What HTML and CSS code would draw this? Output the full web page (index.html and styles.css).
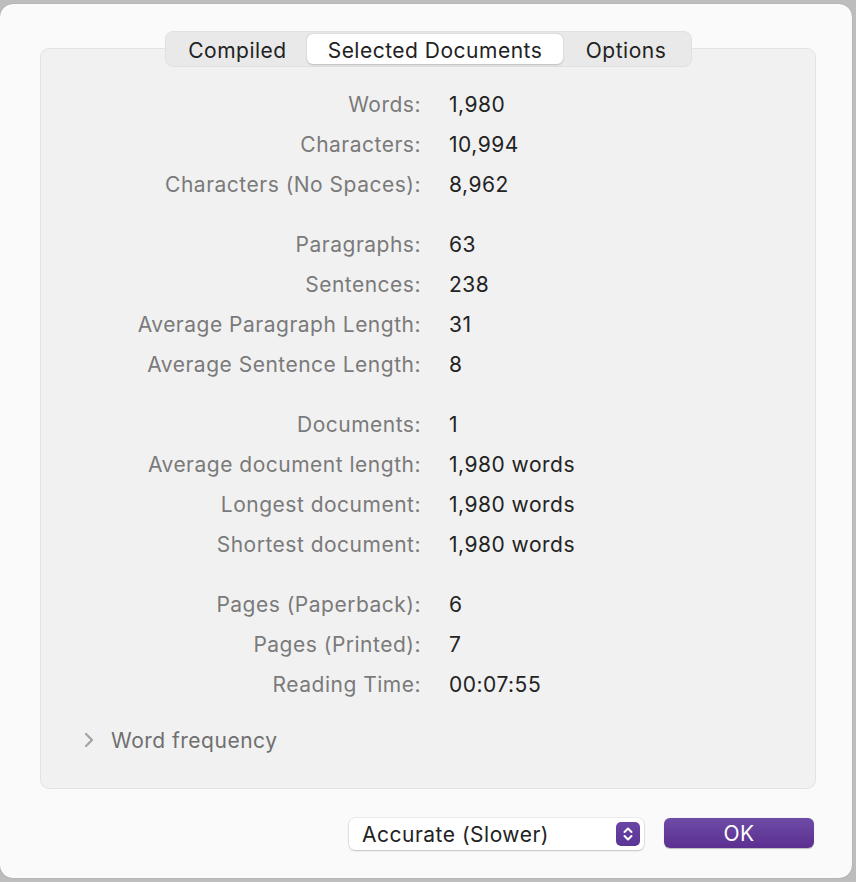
FILE: index.html
```html
<!DOCTYPE html>
<html>
<head>
<meta charset="utf-8">
<link rel="stylesheet" href="styles.css">
</head>
<body>
<div class="sheet">
  <div class="tabs">
    <div class="tab">Compiled</div>
    <div class="tab active">Selected Documents</div>
    <div class="tab">Options</div>
  </div>
  <div class="panel">
    <div class="group">
      <div class="label">Words:</div><div class="value">1,980</div>
      <div class="label">Characters:</div><div class="value">10,994</div>
      <div class="label">Characters (No Spaces):</div><div class="value">8,962</div>
    </div>
    <div class="group">
      <div class="label">Paragraphs:</div><div class="value">63</div>
      <div class="label">Sentences:</div><div class="value">238</div>
      <div class="label">Average Paragraph Length:</div><div class="value">31</div>
      <div class="label">Average Sentence Length:</div><div class="value">8</div>
    </div>
    <div class="group">
      <div class="label">Documents:</div><div class="value">1</div>
      <div class="label">Average document length:</div><div class="value">1,980 words</div>
      <div class="label">Longest document:</div><div class="value">1,980 words</div>
      <div class="label">Shortest document:</div><div class="value">1,980 words</div>
    </div>
    <div class="group">
      <div class="label">Pages (Paperback):</div><div class="value">6</div>
      <div class="label">Pages (Printed):</div><div class="value">7</div>
      <div class="label">Reading Time:</div><div class="value">00:07:55</div>
    </div>
    <div class="disclosure">
      <svg class="chev" width="12" height="16" viewBox="0 0 12 16"><path d="M3 2 L9 8 L3 14" fill="none" stroke="#a3a3a3" stroke-width="2.2" stroke-linecap="round" stroke-linejoin="round"/></svg>
      <span>Word frequency</span>
    </div>
  </div>
  <div class="footer">
    <div class="popup">
      <span>Accurate (Slower)</span>
      <div class="stepper">
        <svg width="24" height="24" viewBox="0 0 24 24"><path d="M8.5 10 L12 6.5 L15.5 10 M8.5 14 L12 17.5 L15.5 14" fill="none" stroke="#fff" stroke-width="2" stroke-linecap="round" stroke-linejoin="round"/></svg>
      </div>
    </div>
    <div class="ok">OK</div>
  </div>
</div>
</body>
</html>
```

FILE: styles.css
```css
html, body {
  margin: 0;
  padding: 0;
}
body {
  background: #bdbdbd;
  width: 856px;
  height: 882px;
  overflow: hidden;
  font-family: Inter, "Liberation Sans", sans-serif;
  font-size: 21px;
  letter-spacing: 0.5px;
}
.sheet {
  margin-top: 4px;
  width: 852px;
  height: 874px;
  background: #fafafa;
  border-radius: 13px;
  box-shadow: 0 0 1px rgba(0,0,0,0.35);
  display: flex;
  flex-direction: column;
  overflow: hidden;
}
.tabs {
  position: relative;
  z-index: 1;
  align-self: flex-start;
  margin: 27px 0 0 165px;
  height: 36px;
  width: 527px;
  box-sizing: border-box;
  padding: 2px;
  background: #e9e9e9;
  border: 1px solid #e0e0e0;
  border-radius: 8px;
  display: flex;
  align-items: stretch;
}
.tab {
  display: flex;
  align-items: center;
  justify-content: center;
  padding-top: 2px;
  color: #222;
  border-radius: 6px;
}
.tab:nth-child(1) { width: 139px; }
.tab:nth-child(2) { width: 256px; }
.tab:nth-child(3) { flex: 1; }
.tab.active {
  background: #fff;
  box-shadow: 0 0.5px 2px rgba(0,0,0,0.2);
}
.panel {
  margin: -19px 0 0 40px;
  width: 776px;
  height: 741px;
  box-sizing: border-box;
  background: #f1f1f1;
  border: 1px solid #e3e3e3;
  border-radius: 9px;
  padding-top: 36px;
  display: flex;
  flex-direction: column;
  gap: 20px;
}
.group {
  display: grid;
  grid-template-columns: 380px 1fr;
  column-gap: 28px;
  grid-auto-rows: 40px;
}
.label, .value {
  line-height: 40px;
  white-space: nowrap;
}
.label {
  text-align: right;
  color: #7a7a7a;
}
.value {
  color: #232323;
}
.disclosure {
  margin-top: -5px;
  height: 40px;
  display: flex;
  align-items: center;
  padding-left: 42px;
  gap: 16px;
  color: #6f6f6f;
}
.footer {
  margin-top: 29px;
  display: flex;
  justify-content: flex-end;
  align-items: flex-start;
  gap: 20px;
  padding-right: 38px;
}
.popup {
  width: 295px;
  height: 32px;
  box-sizing: border-box;
  background: #fff;
  border-radius: 6px;
  box-shadow: 0 0 0 0.5px rgba(0,0,0,0.12), 0 1px 2px rgba(0,0,0,0.18);
  display: flex;
  align-items: center;
  justify-content: space-between;
  padding: 0 4px 0 13px;
  color: #222;
}
.stepper {
  width: 24px;
  height: 24px;
  border-radius: 5px;
  background: linear-gradient(#6a45a6, #5b3596);
  display: flex;
}
.ok {
  width: 150px;
  height: 30px;
  border-radius: 6px;
  background: linear-gradient(#6e4ca6, #5b2f90);
  color: #fff;
  display: flex;
  align-items: center;
  justify-content: center;
  box-shadow: 0 0.5px 1px rgba(0,0,0,0.25);
}
```
